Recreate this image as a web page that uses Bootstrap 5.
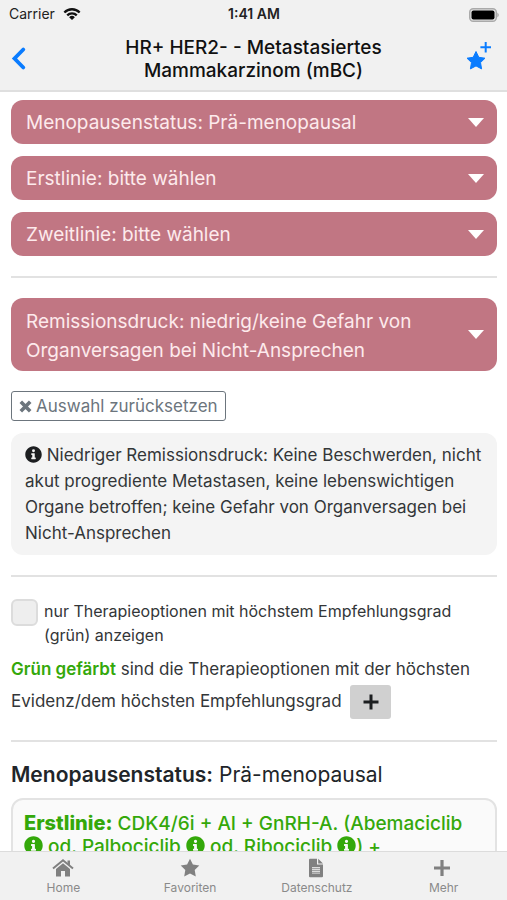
<!DOCTYPE html>
<html lang="de">
<head>
<meta charset="utf-8">
<meta name="viewport" content="width=device-width, initial-scale=1">
<title>HR+ HER2- - Metastasiertes Mammakarzinom (mBC)</title>
<link href="https://cdn.jsdelivr.net/npm/bootstrap@5.3.0/dist/css/bootstrap.min.css" rel="stylesheet">
<style>
  body { font-family: Inter, "Liberation Sans", sans-serif; color: #333638; }
  .app-bars { background: #f1f1f1; }
  .app-top { border-bottom: 2px solid #dfdfdf; }
  .status-row { font-size: 14px; line-height: 20px; padding: 4px 8px 4px 9px; color: #222; }
  .title-row { min-height: 62px; padding: 0 11px; }
  .title-row h1 { font-size: 19px; line-height: 23px; font-weight: 500; color: #111; }
  .side-btn { width: 36px; color: #0a7cff; }
  .content-pane { padding: 8px 10px 0 11px; scrollbar-width: none; }
  .content-pane::-webkit-scrollbar { display: none; }
  .choice-stack { gap: 12px; }
  .choice {
    appearance: none; display: block; width: 100%; border: 0; border-radius: 12px;
    padding: 8px 48px 6px 15px; font-size: 19px; line-height: 30px; color: #fdeaec;
    white-space: normal; height: auto;
    background: #c17683 url("data:image/svg+xml,%3Csvg xmlns='http://www.w3.org/2000/svg' viewBox='0 0 16 9'%3E%3Cpath d='M0 0h16L8 9z' fill='%23fff'/%3E%3C/svg%3E") no-repeat right 13px center / 16px 9px;
  }
  .choice-tall { min-height: 73px; line-height: 29px; }
  .rule { height: 2px; background: #e2e2e2; border: 0; opacity: 1; margin: 20px 0; }
  .reset-btn { --bs-btn-color: #6c757d; border-radius: 3px; margin-top: 20px; padding: 0 7px; font-size: 17px; line-height: 28px; background: #fff; }
  .info-box { background: #f4f4f4; border-radius: 12px; margin-top: 12px; padding: 9px 12px 9px 14px; font-size: 17px; line-height: 26px; }
  .glyph { width: 1em; height: 1em; fill: currentColor; }
  .info-box .glyph { color: #1c1e20; vertical-align: -2px; }
  .option-row { gap: 6px; margin-bottom: 6px; padding-top: 2px; }
  .tick { width: 27px; height: 27px; margin: 0; background-color: #eee; border: 2px solid #dcdcdc; border-radius: 6px !important; }
  .tick-label { font-size: 16px; line-height: 24px; padding-right: 16px; }
  .legend-text { font-size: 17px; line-height: 32px; padding-bottom: 1px; }
  .green { color: #34a80a; }
  .plus-btn { width: 41px; height: 34px; background: #d0d0d0; border-radius: 3px; color: #1c1e20; }
  .section-title { font-size: 21px; line-height: 26px; color: #212529; font-weight: 400; margin-bottom: 10px; }
  .therapy { background: #fafafa; border: 2px solid #e3e3e3; border-radius: 12px; padding: 12px 12px 24px 11px; font-size: 19px; line-height: 23px; font-weight: 500; }
  .therapy strong { font-size: 20px; font-weight: 800; }
  .therapy .glyph { vertical-align: -2px; }
  .tab-row { border-top: 1px solid #dcdcdc; }
  .tab-row a { color: #8a8a8a; font-size: 12px; line-height: 16px; padding: 6px 0 4px; }
  .tab-row svg { height: 20px; margin-bottom: 2px; fill: #808080; }
</style>
<script src="https://cdn.jsdelivr.net/npm/bootstrap@5.3.0/dist/js/bootstrap.bundle.min.js"></script>
</head>
<body class="vh-100 d-flex flex-column overflow-hidden">
<svg class="d-none" aria-hidden="true">
  <symbol id="info" viewBox="0 0 512 512"><path d="M256 8C119 8 8 119 8 256s111 248 248 248 248-111 248-248S393 8 256 8zm0 90a44 44 0 1 1 0 88 44 44 0 0 1 0-88zm68 288a12 12 0 0 1-12 12H200a12 12 0 0 1-12-12v-30a12 12 0 0 1 12-12h18v-74h-18a12 12 0 0 1-12-12v-30a12 12 0 0 1 12-12h82a12 12 0 0 1 12 12v116h18a12 12 0 0 1 12 12z"/></symbol>
</svg>

<header class="app-bars app-top flex-shrink-0">
  <div class="status-row row g-0 align-items-center">
    <div class="col d-flex align-items-center gap-2">Carrier
      <svg width="18" height="14" viewBox="0 0 20 15" aria-hidden="true"><g fill="none" stroke="#111" stroke-width="2.6"><path d="M1.500 5.800a12 12 0 0 1 17 0"/><path d="M4.700 9a7.500 7.500 0 0 1 10.600 0"/></g><path d="M10 14.300 6.800 11.100a4.600 4.600 0 0 1 6.400 0z" fill="#111"/></svg>
    </div>
    <div class="col-auto fw-semibold">1:41 AM</div>
    <div class="col text-end">
      <svg width="30" height="14" viewBox="0 0 30 14" aria-hidden="true"><rect x=".7" y=".7" width="26.600" height="12.600" rx="3.500" fill="#e4e4e4" stroke="#aaa" stroke-width="1.400"/><rect x="2.500" y="2.500" width="23" height="9" rx="2"/><path d="M28.300 4.500q3 2.500 0 5z" fill="#aaa"/></svg>
    </div>
  </div>
  <div class="title-row d-flex align-items-center justify-content-between">
    <button type="button" class="btn p-0 border-0 side-btn text-start" aria-label="Zurück">
      <svg width="15" height="26" viewBox="0 0 15 26" aria-hidden="true"><path d="M12.300 3.500 3.500 12.500l8.800 9" fill="none" stroke="currentColor" stroke-width="3.800" stroke-linecap="round"/></svg>
    </button>
    <h1 class="m-0 text-center">HR+ HER2- - Metastasiertes<br>Mammakarzinom (mBC)</h1>
    <button type="button" class="btn p-0 border-0 side-btn text-end" aria-label="Zu Favoriten hinzufügen">
      <svg width="34" height="34" viewBox="-1 1 34 34" fill="currentColor" aria-hidden="true"><path d="m13 10.500 2.800 5.800 6.200.9-4.500 4.400 1.100 6.300-5.600-3-5.600 3 1.100-6.300L4 17.200l6.200-.9z" stroke="currentColor" stroke-linejoin="round"/><path d="M21.700 1h2v4.300H28v2h-4.300v4.300h-2V7.300h-4.300v-2h4.300z"/></svg>
    </button>
  </div>
</header>

<main class="content-pane flex-grow-1 overflow-auto">
  <div class="choice-stack d-flex flex-column">
    <select class="choice" aria-label="Menopausenstatus"><option>Menopausenstatus: Prä-menopausal</option></select>
    <select class="choice" aria-label="Erstlinie"><option>Erstlinie: bitte wählen</option></select>
    <select class="choice" aria-label="Zweitlinie"><option>Zweitlinie: bitte wählen</option></select>
  </div>
  <hr class="rule">
  <select class="choice choice-tall" aria-label="Remissionsdruck"><option>Remissionsdruck: niedrig/keine Gefahr von Organversagen bei Nicht-Ansprechen</option></select>
  <button type="button" class="btn btn-outline-secondary reset-btn d-flex align-items-center gap-1"><svg width="13" height="13" viewBox="0 0 13 13" aria-hidden="true"><path d="m1.800 1.800 9.400 9.400m0-9.400-9.400 9.400" stroke="currentColor" stroke-width="3.600"/></svg>Auswahl zurücksetzen</button>
  <div class="info-box"><svg class="glyph" aria-hidden="true"><use href="#info"/></svg> Niedriger Remissionsdruck: Keine Beschwerden, nicht akut progrediente Metastasen, keine lebenswichtigen Organe betroffen; keine Gefahr von Organversagen bei Nicht-Ansprechen</div>
  <hr class="rule">
  <div class="option-row d-flex align-items-start">
    <input class="form-check-input tick flex-shrink-0" type="checkbox" id="onlyGreen">
    <label class="tick-label" for="onlyGreen">nur Therapieoptionen mit höchstem Empfehlungsgrad (grün) anzeigen</label>
  </div>
  <div class="legend-text"><span class="green fw-semibold">Grün gefärbt</span> sind die Therapieoptionen mit der höchsten Evidenz/dem höchsten Empfehlungsgrad
    <button type="button" class="btn p-0 border-0 plus-btn ms-1 d-inline-flex align-items-center justify-content-center align-middle" aria-label="Mehr anzeigen"><svg width="16" height="16" viewBox="0 0 16 16" aria-hidden="true"><path d="M8 .5v15M.5 8h15" stroke="currentColor" stroke-width="3"/></svg></button>
  </div>
  <hr class="rule">
  <h2 class="section-title"><strong class="fw-semibold">Menopausenstatus:</strong> Prä-menopausal</h2>
  <div class="therapy green"><strong>Erstlinie:</strong> CDK4/6i + AI + GnRH-A. (Abemaciclib <svg class="glyph" aria-hidden="true"><use href="#info"/></svg> od. Palbociclib <svg class="glyph" aria-hidden="true"><use href="#info"/></svg> od. Ribociclib <svg class="glyph" aria-hidden="true"><use href="#info"/></svg>) +</div>
</main>

<nav class="app-bars tab-row row g-0 row-cols-4 text-center flex-shrink-0" aria-label="Hauptnavigation">
  <a href="#" class="col d-flex flex-column align-items-center text-decoration-none"><svg viewBox="0 0 22 20" aria-hidden="true"><path d="m1 10.500 10-8.300 10 8.300" fill="none" stroke="#808080" stroke-width="2"/><path d="M15.500 2.500H18v5l-2.500-2zM4 11l7-5.800 7 5.800v7.500h-5V13H9v5.500H4z"/></svg>Home</a>
  <a href="#" class="col d-flex flex-column align-items-center text-decoration-none"><svg viewBox="0 0 20 20" aria-hidden="true"><path d="m10 .8 2.900 5.800 6.400.9-4.600 4.500 1.100 6.400-5.800-3-5.800 3 1.100-6.400L.7 7.500l6.400-.9z"/></svg>Favoriten</a>
  <a href="#" class="col d-flex flex-column align-items-center text-decoration-none"><svg viewBox="0 0 16 20" aria-hidden="true"><path fill-rule="evenodd" d="M1 .8h7v5.700h6v11.700a1 1 0 0 1-1 1H1a1 1 0 0 1-1-1V1.800a1 1 0 0 1 1-1zM3 9v6.500h8V9zM9.200.8 14 5.500H9.200z"/><path d="M3 9.800h8v1.200H3zm0 2h8V13H3zm0 2h8V15H3z" opacity=".7"/></svg>Datenschutz</a>
  <a href="#" class="col d-flex flex-column align-items-center text-decoration-none"><svg viewBox="0 0 20 20" aria-hidden="true"><path d="M6.400 2h3.200v6.400H16v3.200H9.600V18H6.400v-6.400H0V8.400h6.400z"/></svg>Mehr</a>
</nav>
</body>
</html>
